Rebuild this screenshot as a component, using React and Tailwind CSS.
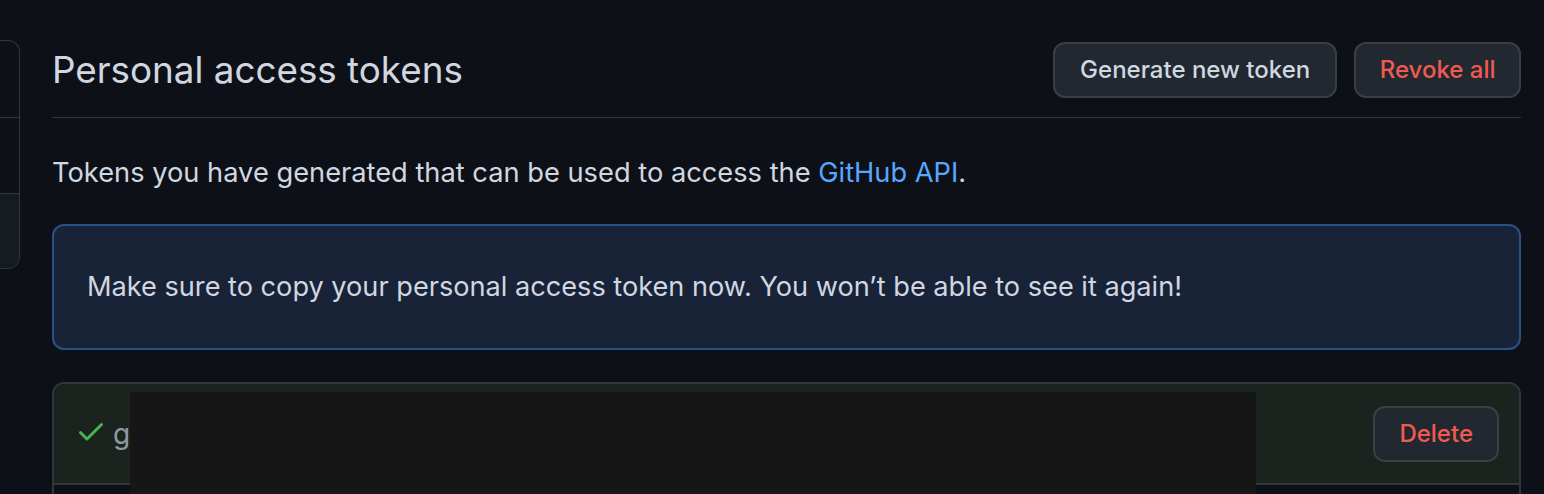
import React from "react";

export default function App() {
  return (
    <div
      className="w-[1544px] h-[494px] overflow-hidden bg-[#0d1117] flex text-[#d1d7e0]"
      style={{ fontFamily: "Inter, 'Noto Sans', sans-serif" }}
    >
      {/* sidebar */}
      <div className="w-[20px] shrink-0 pt-[40px]">
        <div className="border-y border-r border-[#30363d] rounded-r-[12px] overflow-hidden">
          <div className="h-[77px] border-b border-[#30363d]" />
          <div className="h-[76px] border-b border-[#30363d]" />
          <div className="h-[74px] bg-[#161b22]" />
        </div>
      </div>

      {/* main */}
      <div className="flex-1 ml-[32px] mr-[23px] pt-[42px] min-w-0">
        <div className="flex items-center justify-between pb-[19px] border-b border-[#30363d]">
          <h2 className="text-[36.8px] leading-[56px] font-normal">Personal access tokens</h2>
          <div className="flex gap-[17px]">
            <button className="h-[56px] px-[25px] rounded-[12px] border-2 border-[#3a3f46] bg-[#212830] text-[24px] font-medium text-[#d1d7e0]">
              Generate new token
            </button>
            <button className="h-[56px] px-[23.5px] rounded-[12px] border-2 border-[#3a3f46] bg-[#212830] text-[24px] font-medium text-[#f05a50]">
              Revoke all
            </button>
          </div>
        </div>

        <p className="mt-[34px] text-[27.25px] leading-[42px]">
          Tokens you have generated that can be used to access the{" "}
          <span className="text-[#58a6ff]">GitHub API</span>.
        </p>

        <div className="mt-[30px] border-2 border-[#28518a] bg-[#182338] rounded-[12px] px-[33px] py-[40px] text-[27.15px] leading-[42px]">
          Make sure to copy your personal access token now. You won’t be able to see it again!
        </div>

        <div className="relative mt-[32px] border-2 border-[#30363d] rounded-[12px] overflow-hidden">
          <div className="flex items-center justify-between bg-[#1b231f] pl-[21px] pr-[20px] pt-[22px] pb-[21px] border-b-2 border-[#30363d]">
            <div className="flex items-center gap-[6px]">
              <svg width="32" height="32" viewBox="0 0 16 16" fill="#46b450" className="-mt-[6px]">
                <path d="M13.78 4.22a.75.75 0 0 1 0 1.06l-7.25 7.25a.75.75 0 0 1-1.06 0L2.22 9.28a.751.751 0 0 1 .018-1.042.751.751 0 0 1 1.042-.018L6 10.94l6.72-6.72a.75.75 0 0 1 1.06 0Z" />
              </svg>
              <span className="text-[28px] text-[#9198a1]">ghp_token</span>
            </div>
            <button className="h-[56px] px-[24px] rounded-[12px] border-2 border-[#3a3f46] bg-[#212830] text-[24px] font-medium text-[#f05a50]">
              Delete
            </button>
          </div>
          <div className="h-[60px]" />
          <div className="absolute left-[76px] top-[8px] w-[1126px] h-[200px] bg-[#161616]" />
        </div>
      </div>
    </div>
  );
}
